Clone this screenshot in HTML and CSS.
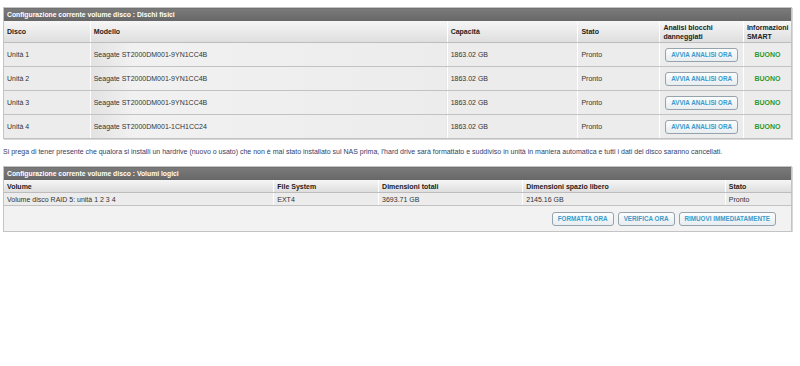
FILE: index.html
```html
<!DOCTYPE html>
<html lang="it">
<head>
  <meta charset="UTF-8">
  <title>Configurazione volume disco</title>
  <link rel="stylesheet" href="styles.css">
</head>
<body>
  <table class="griglia dischi">
    <colgroup>
      <col class="c-disco"><col class="c-modello"><col class="c-capacita">
      <col class="c-stato"><col class="c-analisi"><col class="c-smart">
    </colgroup>
    <tr class="titolo"><td colspan="6">Configurazione corrente volume disco : Dischi fisici</td></tr>
    <tr class="intestazione">
      <th>Disco</th><th>Modello</th><th>Capacità</th><th>Stato</th>
      <th>Analisi blocchi danneggiati</th><th>Informazioni SMART</th>
    </tr>
    <tr class="riga">
      <td>Unità 1</td><td>Seagate ST2000DM001-9YN1CC4B</td><td>1863.02 GB</td><td>Pronto</td>
      <td class="centro"><button class="tasto">AVVIA ANALISI ORA</button></td><td class="buono">BUONO</td>
    </tr>
    <tr class="riga">
      <td>Unità 2</td><td>Seagate ST2000DM001-9YN1CC4B</td><td>1863.02 GB</td><td>Pronto</td>
      <td class="centro"><button class="tasto">AVVIA ANALISI ORA</button></td><td class="buono">BUONO</td>
    </tr>
    <tr class="riga">
      <td>Unità 3</td><td>Seagate ST2000DM001-9YN1CC4B</td><td>1863.02 GB</td><td>Pronto</td>
      <td class="centro"><button class="tasto">AVVIA ANALISI ORA</button></td><td class="buono">BUONO</td>
    </tr>
    <tr class="riga">
      <td>Unità 4</td><td>Seagate ST2000DM001-1CH1CC24</td><td>1863.02 GB</td><td>Pronto</td>
      <td class="centro"><button class="tasto">AVVIA ANALISI ORA</button></td><td class="buono">BUONO</td>
    </tr>
  </table>

  <p class="nota">Si prega di tener presente che qualora si installi un hardrive (nuovo o usato) che non è mai stato installato sul NAS prima, l'hard drive sarà formattato e suddiviso in unità in maniera automatica e tutti i dati del disco saranno cancellati.</p>

  <table class="griglia volumi">
    <colgroup>
      <col class="c-volume"><col class="c-fs"><col class="c-totali">
      <col class="c-libero"><col class="c-stato2">
    </colgroup>
    <tr class="titolo"><td colspan="5">Configurazione corrente volume disco : Volumi logici</td></tr>
    <tr class="intestazione">
      <th>Volume</th><th>File System</th><th>Dimensioni totali</th><th>Dimensioni spazio libero</th><th>Stato</th>
    </tr>
    <tr class="riga">
      <td>Volume disco RAID 5: unità 1 2 3 4</td><td>EXT4</td><td>3693.71 GB</td><td>2145.16 GB</td><td>Pronto</td>
    </tr>
    <tr class="azioni">
      <td colspan="5">
        <div class="tasti">
          <button class="tasto">FORMATTA ORA</button>
          <button class="tasto">VERIFICA ORA</button>
          <button class="tasto">RIMUOVI IMMEDIATAMENTE</button>
        </div>
      </td>
    </tr>
  </table>
</body>
</html>
```

FILE: styles.css
```css
body {
  margin: 7px 0 0 3px;
  font-family: "Liberation Sans", Arial, sans-serif;
  font-size: 7px;
  color: #333;
  background: #fff;
}
.griglia {
  width: 789px;
  border-collapse: collapse;
  table-layout: fixed;
  border: 1px solid #c4c4c4;
  box-shadow: 1px 1px 0 #d8d8d8;
}
.c-disco { width: 11%; }
.c-modello { width: 45.3%; }
.c-capacita { width: 16.6%; }
.c-stato { width: 10.4%; }
.c-analisi { width: 10.6%; }
.c-smart { width: 6.1%; }
.c-volume { width: 34.3%; }
.c-fs { width: 13.3%; }
.c-totali { width: 18.3%; }
.c-libero { width: 25.7%; }
.c-stato2 { width: 8.4%; }
.griglia td,
.griglia th {
  padding: 0 0 0 3px;
  text-align: left;
  vertical-align: middle;
  overflow: hidden;
}
.titolo td {
  height: 13px;
  background: linear-gradient(#7a7a7a, #676767);
  color: #fff;
  font-weight: bold;
  font-size: 6.8px;
}
.intestazione th {
  background: linear-gradient(#f6f6f6, #dedede);
  color: #222;
  font-weight: bold;
  border-left: 1px solid #fff;
  border-bottom: 1px solid #bdbdbd;
  line-height: 9px;
}
.intestazione th:first-child,
.riga td:first-child {
  border-left: none;
}
.dischi .intestazione th {
  height: 21px;
}
.volumi .intestazione th {
  height: 12px;
}
.riga td {
  background: #ececec;
  border-left: 1px solid #fff;
  border-bottom: 1px solid #c2c2c2;
}
.dischi .riga td {
  height: 23px;
}
.volumi .riga td {
  height: 12px;
}
.dischi .riga td:nth-child(2) {
  background: linear-gradient(90deg, #e2e2e2, #f1f1f1 12%, #ececec);
}
.centro {
  text-align: center !important;
  padding: 0 !important;
}
.buono {
  color: #2e9a2e;
  font-weight: bold;
  text-align: center !important;
  padding: 0 !important;
}
.tasto {
  font-family: inherit;
  font-size: 6.3px;
  font-weight: bold;
  color: #3a9ccc;
  background: linear-gradient(#fdfdfd, #e7edf1);
  border: 1px solid #95a3ad;
  border-radius: 3px;
  padding: 0 5px;
  height: 14px;
  white-space: nowrap;
  cursor: pointer;
}
.dischi .tasto {
  width: 73px;
  padding: 0;
}
.azioni td {
  height: 25px;
  background: #f2f2f2;
}
.tasti {
  display: flex;
  justify-content: flex-end;
  gap: 4px;
  padding-right: 15px;
}
.nota {
  margin: 8px 0 10px;
  color: #34406a;
  line-height: 9px;
}
```
